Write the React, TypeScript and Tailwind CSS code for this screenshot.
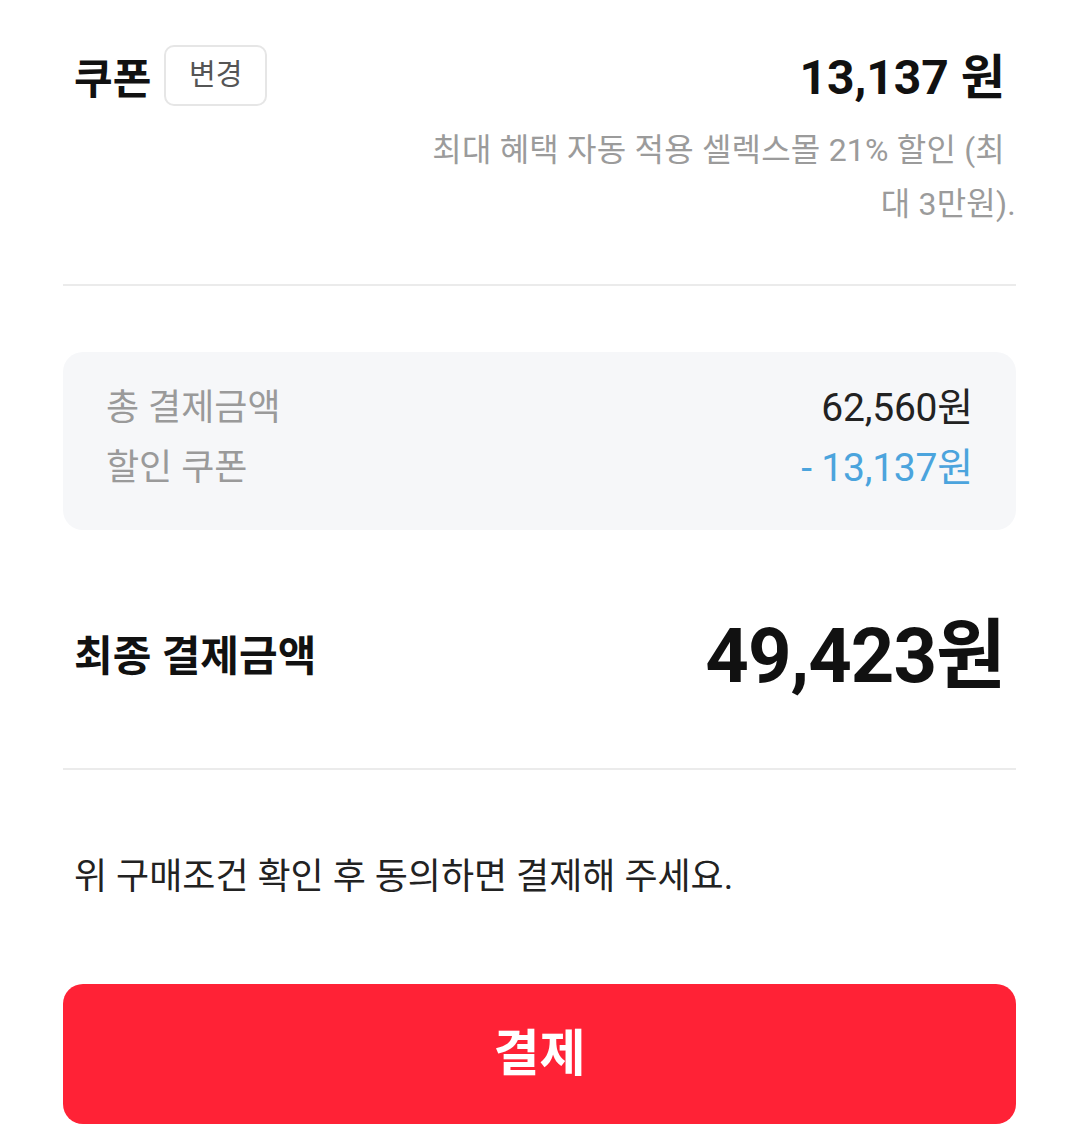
export default function App() {
  return (
    <div className="w-[1079px] h-[1144px] bg-white font-[Roboto,'Noto_Sans_CJK_KR',sans-serif] text-[#111] overflow-hidden">
      <div className="px-[63px]">
        {/* Coupon */}
        <div className="pt-[45px] px-[11px]">
          <div className="flex items-center justify-between h-[61px]">
            <div className="flex items-center gap-[13px]">
              <span className="text-[42px] font-bold leading-none pt-[8px]">쿠폰</span>
              <button className="w-[103px] h-[61px] rounded-[10px] border-2 border-[#e6e6e6] text-[29px] text-[#555] leading-none">
                변경
              </button>
            </div>
            <span className="text-[48px] font-bold leading-none pt-[4px]">13,137 원</span>
          </div>
        </div>
        <p className="mt-[17px] text-right text-[32px] leading-[54px] text-[#9b9b9b] tracking-[0.2px]">
          <span className="pr-[11px]">최대 혜택 자동 적용 셀렉스몰 21% 할인 (최</span>
          <br />
          대 3만원).
        </p>

        <div className="mt-[53px] h-[2px] bg-[#ebebeb]" />

        {/* Summary box */}
        <div className="mt-[66px] rounded-[20px] bg-[#f6f7f9] pl-[43px] pr-[43px] pt-[26px] pb-[32px]">
          <div className="flex items-center justify-between h-[60px]">
            <span className="text-[36px] text-[#9a9a9a]">총 결제금액</span>
            <span className="text-[39px] text-[#222] tracking-[-0.2px]">62,560원</span>
          </div>
          <div className="flex items-center justify-between h-[60px]">
            <span className="text-[36px] text-[#9a9a9a]">할인 쿠폰</span>
            <span className="text-[39px] text-[#4ba4dd] tracking-[-0.2px]">- 13,137원</span>
          </div>
        </div>

        {/* Final amount */}
        <div className="mt-[81px] h-[90px] px-[11px] flex items-center justify-between">
          <span className="text-[42px] font-bold">최종 결제금액</span>
          <span className="text-[76px] font-bold leading-none tracking-[-1px]">49,423원</span>
        </div>

        <div className="mt-[67px] h-[2px] bg-[#ebebeb]" />

        <p className="mt-[83px] px-[11px] text-[36px] leading-[48px] text-[#222]">
          위 구매조건 확인 후 동의하면 결제해 주세요.
        </p>

        <button className="mt-[83px] w-full h-[140px] rounded-[20px] bg-[#ff2236] text-white text-[50px] font-bold">
          결제
        </button>
      </div>
    </div>
  );
}
